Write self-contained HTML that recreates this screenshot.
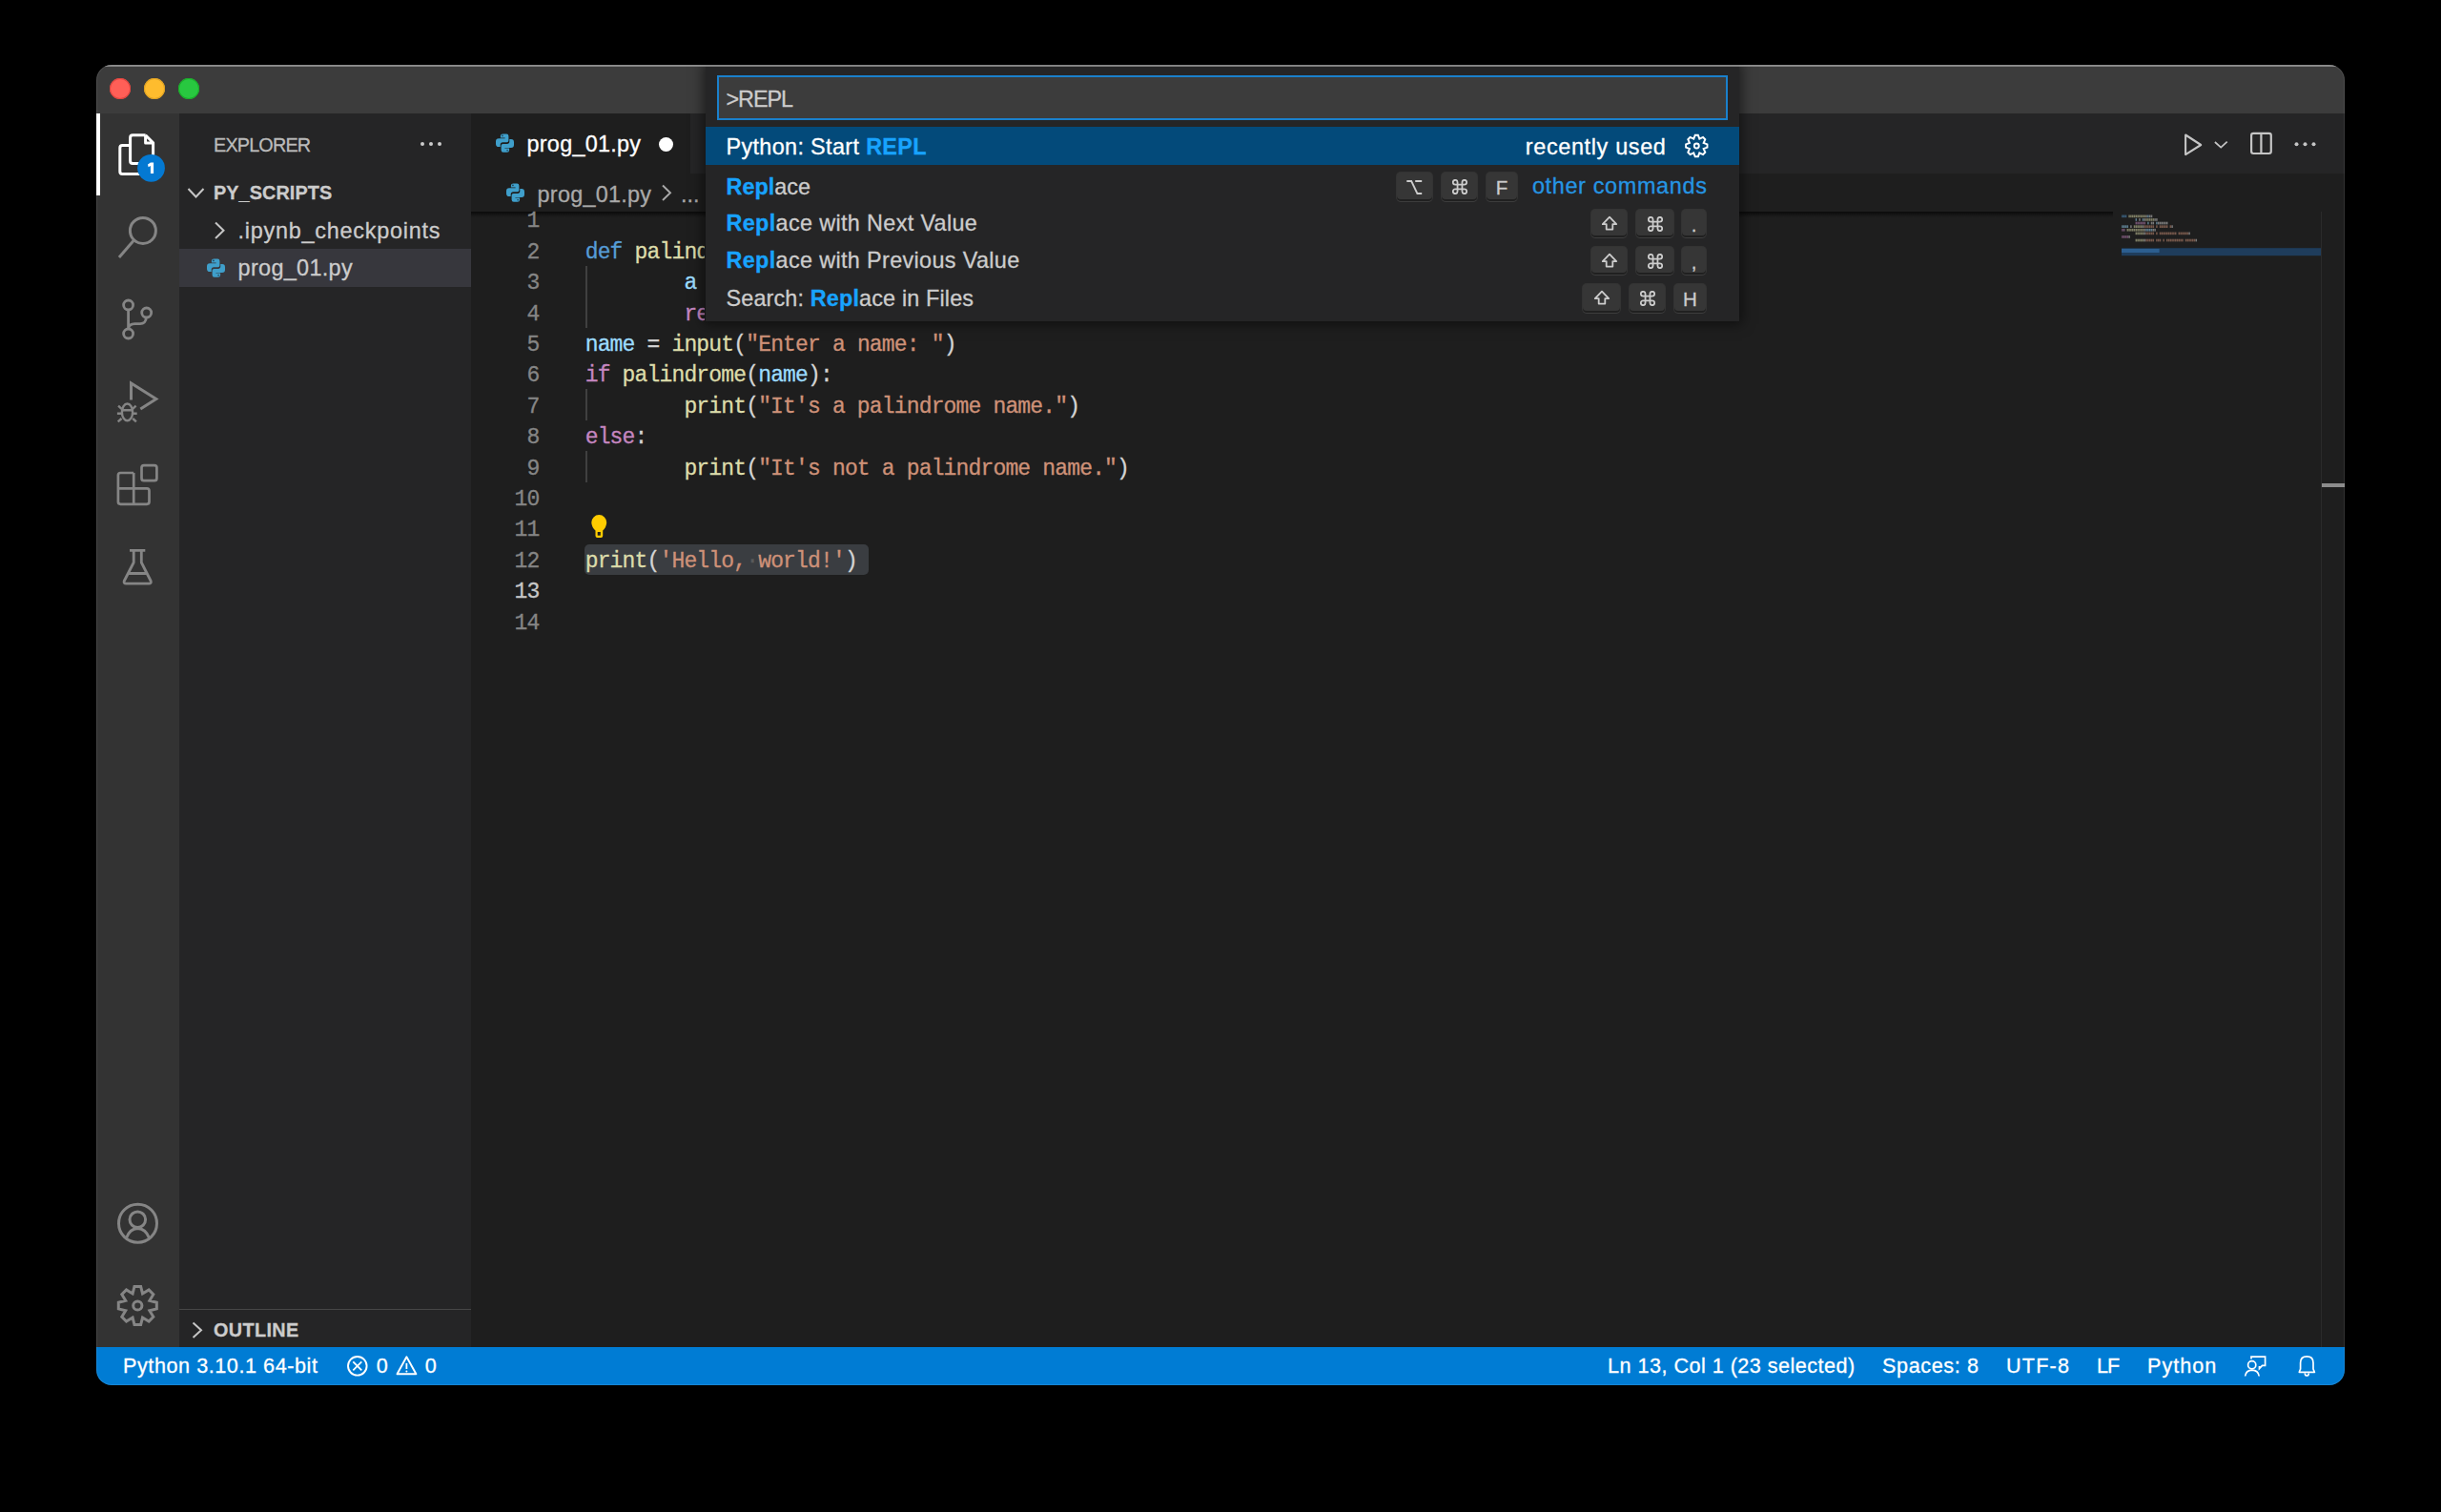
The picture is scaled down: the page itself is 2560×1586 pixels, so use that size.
<!DOCTYPE html>
<html><head><meta charset="utf-8"><style>
html,body{margin:0;padding:0;background:#000;width:2560px;height:1586px;overflow:hidden;}
.win{position:absolute;left:101px;top:68px;width:2358px;height:1385px;border-radius:16px;overflow:hidden;background:#1e1e1e;}
.in{position:absolute;left:-101px;top:-68px;width:2560px;height:1586px;}
.t{position:absolute;white-space:pre;-webkit-text-stroke:0.3px currentColor;}
.s{font-family:"Liberation Sans", sans-serif;}
.m{font-family:"Liberation Mono", monospace;}
.r{position:absolute;}
</style></head><body><div class="win"><div class="in">
<div class="r" style="left:101px;top:68px;width:2358px;height:51px;background:#3c3c3c;"></div>
<div class="r" style="left:101px;top:119px;width:87px;height:1294px;background:#333333;"></div>
<div class="r" style="left:101px;top:119px;width:4px;height:86px;background:#ffffff;"></div>
<div class="r" style="left:188px;top:119px;width:306px;height:1294px;background:#252526;"></div>
<div class="r" style="left:494px;top:119px;width:1965px;height:63px;background:#252526;"></div>
<div class="r" style="left:494px;top:119px;width:230px;height:63px;background:#1e1e1e;"></div>
<div class="r" style="left:494px;top:182px;width:1965px;height:1231px;background:#1e1e1e;"></div>
<div class="r" style="left:101px;top:1413px;width:2358px;height:40px;background:#007cd4;"></div>
<div class="r" style="left:115px;top:82px;width:22px;height:22px;border-radius:50%;background:#ff5f57;box-shadow:inset 0 0 0 1px #e0443e;"></div>
<div class="r" style="left:151px;top:82px;width:22px;height:22px;border-radius:50%;background:#febc2e;box-shadow:inset 0 0 0 1px #dea123;"></div>
<div class="r" style="left:187px;top:82px;width:22px;height:22px;border-radius:50%;background:#28c840;box-shadow:inset 0 0 0 1px #1aab29;"></div>
<svg class="r" style="left:0;top:0;" width="2560" height="1586" viewBox="0 0 2560 1586"><path d="M136.6 152.5 H128.3 Q125.8 152.5 125.8 155 V179.9 Q125.8 182.4 128.3 182.4 H150" fill="none" stroke="#ffffff" stroke-width="3" stroke-linejoin="round"/><path d="M152.6 141.8 H139.1 Q136.6 141.8 136.6 144.3 V169 Q136.6 171.5 139.1 171.5 H150 M152.6 141.8 L160.6 149.8 V172 M152.6 141.8 V150 H160.6" fill="none" stroke="#ffffff" stroke-width="3" stroke-linejoin="round"/><circle cx="158.5" cy="176.3" r="14.4" fill="#0479d2"/><circle cx="149.9" cy="241.9" r="13.5" fill="none" stroke="#858585" stroke-width="3"/><path d="M140.2 252.3 L125.9 268.8" fill="none" stroke="#858585" stroke-width="3" stroke-linecap="square"/><circle cx="134.6" cy="320" r="5" fill="none" stroke="#858585" stroke-width="2.8"/><circle cx="153.7" cy="328" r="5" fill="none" stroke="#858585" stroke-width="2.8"/><circle cx="134.6" cy="350" r="5" fill="none" stroke="#858585" stroke-width="2.8"/><path d="M134.6 325 V345 M153.3 333 C153.3 337.5 150.5 339.6 147 339.6 H141.5 C137.5 339.6 135 341.5 134.8 344.5" fill="none" stroke="#858585" stroke-width="2.8" /><path d="M137.5 419.6 V402 L163.8 418.4 L147.3 429" fill="none" stroke="#858585" stroke-width="3" stroke-linejoin="miter"/><ellipse cx="133.5" cy="432.4" rx="5.6" ry="8.9" fill="none" stroke="#858585" stroke-width="2.4"/><path d="M127.8 430.2 H138.8 M124.1 425.7 L127.5 428.8 M142.6 425.7 L139.2 428.8 M122.9 433.8 H127.5 M143.7 433.8 H139.2 M123.7 442.4 L127.5 439 M142.9 442.4 L139.2 439" fill="none" stroke="#858585" stroke-width="2.4" /><path d="M140.2 496 H126.4 Q123.9 496 123.9 498.5 V526.3 Q123.9 528.8 126.4 528.8 H154 Q156.5 528.8 156.5 526.3 V514.8 Q156.5 512.3 154 512.3 H123.9 M140.2 496 V528.8" fill="none" stroke="#858585" stroke-width="2.7" /><rect x="148.5" y="488.1" width="15.9" height="16.1" rx="2.5" fill="none" stroke="#858585" stroke-width="2.7"/><path d="M136 577.3 H152.3 M140.2 577.3 V590 L130.2 609.5 Q129.5 612.2 132.2 612.2 H156.2 Q158.9 612.2 158.2 609.5 L148.3 590 V577.3 M134.4 601.5 H153.9" fill="none" stroke="#858585" stroke-width="2.8" stroke-linejoin="round"/><circle cx="144.5" cy="1283.2" r="20" fill="none" stroke="#858585" stroke-width="3"/><circle cx="144.3" cy="1279.3" r="8.3" fill="none" stroke="#858585" stroke-width="3"/><path d="M132.4 1298.8 Q136 1288.6 144.4 1288.4 Q152.8 1288.6 156.6 1298.8" fill="none" stroke="#858585" stroke-width="3" /><path d="M140.97 1349.48 L147.63 1349.48 L149.50 1356.94 L156.10 1352.98 L160.82 1357.70 L156.86 1364.30 L164.32 1366.17 L164.32 1372.83 L156.86 1374.70 L160.82 1381.30 L156.10 1386.02 L149.50 1382.06 L147.63 1389.52 L140.97 1389.52 L139.10 1382.06 L132.50 1386.02 L127.78 1381.30 L131.74 1374.70 L124.28 1372.83 L124.28 1366.17 L131.74 1364.30 L127.78 1357.70 L132.50 1352.98 L139.10 1356.94 Z" fill="none" stroke="#858585" stroke-width="3" stroke-linejoin="miter"/><circle cx="144.3" cy="1369.5" r="4.6" fill="none" stroke="#858585" stroke-width="3"/></svg>
<svg class="r" style="left:0;top:0;" width="2560" height="1586" viewBox="0 0 2560 1586"><path d="M157.9 170.4 H161.1 V181.9 H157.9 V174.1 L155.6 175.3 L155 172.5 Z" fill="#ffffff"/></svg>
<div class="t s" style="left:224px;top:138.94px;font-size:19.8px;line-height:26px;color:#bbbbbb;letter-spacing:-0.81px;">EXPLORER</div>
<div class="r" style="left:441px;top:149px;width:4px;height:4px;border-radius:50%;background:#cccccc"></div>
<div class="r" style="left:450px;top:149px;width:4px;height:4px;border-radius:50%;background:#cccccc"></div>
<div class="r" style="left:459px;top:149px;width:4px;height:4px;border-radius:50%;background:#cccccc"></div>
<div class="t s" style="left:224px;top:189.14px;font-size:19.8px;line-height:26px;color:#cccccc;font-weight:700;letter-spacing:0.11px;">PY_SCRIPTS</div>
<div class="t s" style="left:249.6px;top:227.39px;font-size:23.4px;line-height:30px;color:#cccccc;letter-spacing:0.76px;">.ipynb_checkpoints</div>
<div class="r" style="left:188px;top:261px;width:306px;height:40px;background:#37373d;"></div>
<div class="t s" style="left:249.6px;top:265.89px;font-size:23.4px;line-height:30px;color:#cccccc;letter-spacing:0.33px;">prog_01.py</div>
<div class="r" style="left:188px;top:1373px;width:306px;height:1px;background:#474747;"></div>
<div class="t s" style="left:224px;top:1382.14px;font-size:19.8px;line-height:26px;color:#cccccc;font-weight:700;letter-spacing:0.4px;">OUTLINE</div>
<svg class="r" style="left:0;top:0;" width="2560" height="1586" viewBox="0 0 2560 1586"><path d="M197.5 198 L205.5 206.5 L213.5 198" fill="none" stroke="#c5c5c5" stroke-width="2" /><path d="M226 233.5 L234.5 241.7 L226 250" fill="none" stroke="#c5c5c5" stroke-width="2" /><path d="M202.5 1387.5 L211 1395.3 L202.5 1403" fill="none" stroke="#c5c5c5" stroke-width="2" /><path d="M695 194.5 L703 202.3 L695 210" fill="none" stroke="#a9a9a9" stroke-width="1.9" /><path d="M2292.1 141.5 V162.1 L2308.2 152 Z" fill="none" stroke="#c5c5c5" stroke-width="2.1" stroke-linejoin="round"/><path d="M2322.9 149 L2329.2 154.6 L2335.7 148.7" fill="none" stroke="#c5c5c5" stroke-width="1.7" /><rect x="2361.1" y="139.9" width="20.7" height="21.1" rx="2.2" fill="none" stroke="#c5c5c5" stroke-width="2.2"/><path d="M2371.4 140 V161" fill="none" stroke="#c5c5c5" stroke-width="2.2" /><circle cx="2408.5" cy="151.3" r="2" fill="#c5c5c5"/><circle cx="2417.5" cy="151.3" r="2" fill="#c5c5c5"/><circle cx="2426.5" cy="151.3" r="2" fill="#c5c5c5"/></svg>
<svg class="r" style="left:212.3px;top:266.3px" width="30" height="30" viewBox="0 0 30 30"><path d="M9.9 7.6 Q9.9 5.4 12.3 5.4 H16.2 Q18.4 5.4 18.4 7.7 V12.5 Q18.4 14.3 16.5 14.3 H12.3 Q9.7 14.3 9.7 16.9 V19.1 H8 Q5 19.1 5 16 V13.2 Q5 10.3 8 10.3 H14.6 V9.6 H9.9 Z" fill="#3f9fcb"/><path d="M9.9 7.6 Q9.9 5.4 12.3 5.4 H16.2 Q18.4 5.4 18.4 7.7 V12.5 Q18.4 14.3 16.5 14.3 H12.3 Q9.7 14.3 9.7 16.9 V19.1 H8 Q5 19.1 5 16 V13.2 Q5 10.3 8 10.3 H14.6 V9.6 H9.9 Z" fill="#3f9fcb" transform="rotate(180 14.5 15.1)"/><circle cx="11.9" cy="7.4" r="0.8" fill="#1e3a4a"/><circle cx="17.1" cy="22.8" r="0.8" fill="#1e3a4a"/></svg>
<svg class="r" style="left:515px;top:135px" width="30" height="30" viewBox="0 0 30 30"><path d="M9.9 7.6 Q9.9 5.4 12.3 5.4 H16.2 Q18.4 5.4 18.4 7.7 V12.5 Q18.4 14.3 16.5 14.3 H12.3 Q9.7 14.3 9.7 16.9 V19.1 H8 Q5 19.1 5 16 V13.2 Q5 10.3 8 10.3 H14.6 V9.6 H9.9 Z" fill="#3f9fcb"/><path d="M9.9 7.6 Q9.9 5.4 12.3 5.4 H16.2 Q18.4 5.4 18.4 7.7 V12.5 Q18.4 14.3 16.5 14.3 H12.3 Q9.7 14.3 9.7 16.9 V19.1 H8 Q5 19.1 5 16 V13.2 Q5 10.3 8 10.3 H14.6 V9.6 H9.9 Z" fill="#3f9fcb" transform="rotate(180 14.5 15.1)"/><circle cx="11.9" cy="7.4" r="0.8" fill="#1e3a4a"/><circle cx="17.1" cy="22.8" r="0.8" fill="#1e3a4a"/></svg>
<svg class="r" style="left:526px;top:186.8px" width="30" height="30" viewBox="0 0 30 30"><path d="M9.9 7.6 Q9.9 5.4 12.3 5.4 H16.2 Q18.4 5.4 18.4 7.7 V12.5 Q18.4 14.3 16.5 14.3 H12.3 Q9.7 14.3 9.7 16.9 V19.1 H8 Q5 19.1 5 16 V13.2 Q5 10.3 8 10.3 H14.6 V9.6 H9.9 Z" fill="#3f9fcb"/><path d="M9.9 7.6 Q9.9 5.4 12.3 5.4 H16.2 Q18.4 5.4 18.4 7.7 V12.5 Q18.4 14.3 16.5 14.3 H12.3 Q9.7 14.3 9.7 16.9 V19.1 H8 Q5 19.1 5 16 V13.2 Q5 10.3 8 10.3 H14.6 V9.6 H9.9 Z" fill="#3f9fcb" transform="rotate(180 14.5 15.1)"/><circle cx="11.9" cy="7.4" r="0.8" fill="#1e3a4a"/><circle cx="17.1" cy="22.8" r="0.8" fill="#1e3a4a"/></svg>
<div class="t s" style="left:552.5px;top:135.59px;font-size:23.4px;line-height:30px;color:#ffffff;letter-spacing:0.28px;">prog_01.py</div>
<div class="r" style="left:691px;top:144px;width:15px;height:15px;border-radius:50%;background:#ffffff"></div>
<div class="t s" style="left:563.6px;top:188.69px;font-size:23.4px;line-height:30px;color:#a9a9a9;letter-spacing:0.27px;">prog_01.py</div>
<div class="t s" style="left:714px;top:188.69px;font-size:23.4px;line-height:30px;color:#a9a9a9;">...</div>
<div class="r" style="left:494px;top:222px;width:1722px;height:6px;background:linear-gradient(#000000aa,#00000000);"></div>
<div class="t m" style="right:1994.5px;top:217.38px;font-size:23.0px;line-height:30px;color:#858585;letter-spacing:-0.84px;">1</div>
<div class="t m" style="right:1994.5px;top:249.78px;font-size:23.0px;line-height:30px;color:#858585;letter-spacing:-0.84px;">2</div>
<div class="t m" style="right:1994.5px;top:282.18px;font-size:23.0px;line-height:30px;color:#858585;letter-spacing:-0.84px;">3</div>
<div class="t m" style="right:1994.5px;top:314.58px;font-size:23.0px;line-height:30px;color:#858585;letter-spacing:-0.84px;">4</div>
<div class="t m" style="right:1994.5px;top:346.98px;font-size:23.0px;line-height:30px;color:#858585;letter-spacing:-0.84px;">5</div>
<div class="t m" style="right:1994.5px;top:379.38px;font-size:23.0px;line-height:30px;color:#858585;letter-spacing:-0.84px;">6</div>
<div class="t m" style="right:1994.5px;top:411.78px;font-size:23.0px;line-height:30px;color:#858585;letter-spacing:-0.84px;">7</div>
<div class="t m" style="right:1994.5px;top:444.18px;font-size:23.0px;line-height:30px;color:#858585;letter-spacing:-0.84px;">8</div>
<div class="t m" style="right:1994.5px;top:476.58px;font-size:23.0px;line-height:30px;color:#858585;letter-spacing:-0.84px;">9</div>
<div class="t m" style="right:1994.5px;top:508.98px;font-size:23.0px;line-height:30px;color:#858585;letter-spacing:-0.84px;">10</div>
<div class="t m" style="right:1994.5px;top:541.38px;font-size:23.0px;line-height:30px;color:#858585;letter-spacing:-0.84px;">11</div>
<div class="t m" style="right:1994.5px;top:573.78px;font-size:23.0px;line-height:30px;color:#858585;letter-spacing:-0.84px;">12</div>
<div class="t m" style="right:1994.5px;top:606.18px;font-size:23.0px;line-height:30px;color:#c6c6c6;letter-spacing:-0.84px;">13</div>
<div class="t m" style="right:1994.5px;top:638.58px;font-size:23.0px;line-height:30px;color:#858585;letter-spacing:-0.84px;">14</div>
<div class="r" style="left:613px;top:571px;width:298px;height:32px;background:#3a3d41;border-radius:5px;"></div>
<div class="t m" style="left:613.70px;top:250.78px;font-size:23.0px;letter-spacing:-0.840px;line-height:28px;width:125.30px;overflow:hidden;"><span style="color:#569cd6">def</span><span style="color:#d4d4d4"> </span><span style="color:#dcdcaa">palindrome</span><span style="color:#d4d4d4">(</span><span style="color:#9cdcfe">s</span><span style="color:#d4d4d4">):</span></div>
<div class="t m" style="left:717.38px;top:283.18px;font-size:23.0px;letter-spacing:-0.840px;line-height:28px;width:21.62px;overflow:hidden;"><span style="color:#9cdcfe">a</span><span style="color:#d4d4d4"> = </span><span style="color:#9cdcfe">s</span><span style="color:#d4d4d4">.</span><span style="color:#dcdcaa">upper</span><span style="color:#d4d4d4">()</span></div>
<div class="t m" style="left:717.38px;top:315.58px;font-size:23.0px;letter-spacing:-0.840px;line-height:28px;width:21.62px;overflow:hidden;"><span style="color:#c586c0">return</span><span style="color:#d4d4d4"> </span><span style="color:#9cdcfe">a</span><span style="color:#d4d4d4"> == </span><span style="color:#9cdcfe">a</span><span style="color:#d4d4d4">[::-</span><span style="color:#b5cea8">1</span><span style="color:#d4d4d4">]</span></div>
<div class="t m" style="left:613.70px;top:347.98px;font-size:23.0px;letter-spacing:-0.840px;line-height:28px;"><span style="color:#9cdcfe">name</span><span style="color:#d4d4d4"> = </span><span style="color:#dcdcaa">input</span><span style="color:#d4d4d4">(</span><span style="color:#ce9178">"Enter a name: "</span><span style="color:#d4d4d4">)</span></div>
<div class="t m" style="left:613.70px;top:380.38px;font-size:23.0px;letter-spacing:-0.840px;line-height:28px;"><span style="color:#c586c0">if</span><span style="color:#d4d4d4"> </span><span style="color:#dcdcaa">palindrome</span><span style="color:#d4d4d4">(</span><span style="color:#9cdcfe">name</span><span style="color:#d4d4d4">):</span></div>
<div class="t m" style="left:717.38px;top:412.78px;font-size:23.0px;letter-spacing:-0.840px;line-height:28px;"><span style="color:#dcdcaa">print</span><span style="color:#d4d4d4">(</span><span style="color:#ce9178">"It's a palindrome name."</span><span style="color:#d4d4d4">)</span></div>
<div class="t m" style="left:613.70px;top:445.18px;font-size:23.0px;letter-spacing:-0.840px;line-height:28px;"><span style="color:#c586c0">else</span><span style="color:#d4d4d4">:</span></div>
<div class="t m" style="left:717.38px;top:477.58px;font-size:23.0px;letter-spacing:-0.840px;line-height:28px;"><span style="color:#dcdcaa">print</span><span style="color:#d4d4d4">(</span><span style="color:#ce9178">"It's not a palindrome name."</span><span style="color:#d4d4d4">)</span></div>
<div class="t m" style="left:613.70px;top:574.78px;font-size:23.0px;letter-spacing:-0.840px;line-height:28px;"><span style="color:#dcdcaa">print</span><span style="color:#d4d4d4">(</span><span style="color:#ce9178">'Hello,</span><span style="color:#5a5a5a">·</span><span style="color:#ce9178">world!'</span><span style="color:#d4d4d4">)</span></div>
<div class="r" style="left:614px;top:279px;width:2px;height:32px;background:#404040;"></div>
<div class="r" style="left:614px;top:311px;width:2px;height:33px;background:#404040;"></div>
<div class="r" style="left:614px;top:408px;width:2px;height:33px;background:#404040;"></div>
<div class="r" style="left:614px;top:473px;width:2px;height:33px;background:#404040;"></div>
<svg class="r" style="left:0;top:0;" width="2560" height="1586" viewBox="0 0 2560 1586"><path d="M620.3 548 A7.95 7.95 0 1 1 636.2 548 Q636 553 632.2 556.5 V562 Q632.2 564 630.2 564 H626.5 Q624.5 564 624.5 562 V556.5 Q620.5 553 620.3 548 Z" fill="#ffcc00"/><rect x="626.7" y="558" width="3.1" height="3.7" fill="#1e1e1e"/></svg>
<svg class="r" style="left:0;top:0;" width="2560" height="1586" viewBox="0 0 2560 1586"><rect x="2225.15" y="225.5" width="1.5" height="2.7" fill="#569cd6" opacity="0.5"/><rect x="2226.95" y="225.5" width="1.5" height="2.7" fill="#569cd6" opacity="0.5"/><rect x="2228.75" y="225.5" width="1.5" height="2.7" fill="#569cd6" opacity="0.5"/><rect x="2232.35" y="225.5" width="1.5" height="2.7" fill="#dcdcaa" opacity="0.5"/><rect x="2234.15" y="225.5" width="1.5" height="2.7" fill="#dcdcaa" opacity="0.5"/><rect x="2235.95" y="225.5" width="1.5" height="2.7" fill="#dcdcaa" opacity="0.5"/><rect x="2237.75" y="225.5" width="1.5" height="2.7" fill="#dcdcaa" opacity="0.5"/><rect x="2239.55" y="225.5" width="1.5" height="2.7" fill="#dcdcaa" opacity="0.5"/><rect x="2241.35" y="225.5" width="1.5" height="2.7" fill="#dcdcaa" opacity="0.5"/><rect x="2243.15" y="225.5" width="1.5" height="2.7" fill="#dcdcaa" opacity="0.5"/><rect x="2244.95" y="225.5" width="1.5" height="2.7" fill="#dcdcaa" opacity="0.5"/><rect x="2246.75" y="225.5" width="1.5" height="2.7" fill="#dcdcaa" opacity="0.5"/><rect x="2248.55" y="225.5" width="1.5" height="2.7" fill="#dcdcaa" opacity="0.5"/><rect x="2250.35" y="225.5" width="1.5" height="2.7" fill="#d4d4d4" opacity="0.5"/><rect x="2252.15" y="225.5" width="1.5" height="2.7" fill="#9cdcfe" opacity="0.5"/><rect x="2253.95" y="225.5" width="1.5" height="2.7" fill="#d4d4d4" opacity="0.5"/><rect x="2255.75" y="225.5" width="1.5" height="2.7" fill="#d4d4d4" opacity="0.5"/><rect x="2239.55" y="229.1" width="1.5" height="2.7" fill="#9cdcfe" opacity="0.5"/><rect x="2243.15" y="229.1" width="1.5" height="2.7" fill="#d4d4d4" opacity="0.5"/><rect x="2246.75" y="229.1" width="1.5" height="2.7" fill="#9cdcfe" opacity="0.5"/><rect x="2248.55" y="229.1" width="1.5" height="2.7" fill="#d4d4d4" opacity="0.5"/><rect x="2250.35" y="229.1" width="1.5" height="2.7" fill="#dcdcaa" opacity="0.5"/><rect x="2252.15" y="229.1" width="1.5" height="2.7" fill="#dcdcaa" opacity="0.5"/><rect x="2253.95" y="229.1" width="1.5" height="2.7" fill="#dcdcaa" opacity="0.5"/><rect x="2255.75" y="229.1" width="1.5" height="2.7" fill="#dcdcaa" opacity="0.5"/><rect x="2257.55" y="229.1" width="1.5" height="2.7" fill="#dcdcaa" opacity="0.5"/><rect x="2259.35" y="229.1" width="1.5" height="2.7" fill="#d4d4d4" opacity="0.5"/><rect x="2261.15" y="229.1" width="1.5" height="2.7" fill="#d4d4d4" opacity="0.5"/><rect x="2239.55" y="232.7" width="1.5" height="2.7" fill="#c586c0" opacity="0.5"/><rect x="2241.35" y="232.7" width="1.5" height="2.7" fill="#c586c0" opacity="0.5"/><rect x="2243.15" y="232.7" width="1.5" height="2.7" fill="#c586c0" opacity="0.5"/><rect x="2244.95" y="232.7" width="1.5" height="2.7" fill="#c586c0" opacity="0.5"/><rect x="2246.75" y="232.7" width="1.5" height="2.7" fill="#c586c0" opacity="0.5"/><rect x="2248.55" y="232.7" width="1.5" height="2.7" fill="#c586c0" opacity="0.5"/><rect x="2252.15" y="232.7" width="1.5" height="2.7" fill="#9cdcfe" opacity="0.5"/><rect x="2255.75" y="232.7" width="1.5" height="2.7" fill="#d4d4d4" opacity="0.5"/><rect x="2257.55" y="232.7" width="1.5" height="2.7" fill="#d4d4d4" opacity="0.5"/><rect x="2261.15" y="232.7" width="1.5" height="2.7" fill="#9cdcfe" opacity="0.5"/><rect x="2262.95" y="232.7" width="1.5" height="2.7" fill="#d4d4d4" opacity="0.5"/><rect x="2264.75" y="232.7" width="1.5" height="2.7" fill="#d4d4d4" opacity="0.5"/><rect x="2266.55" y="232.7" width="1.5" height="2.7" fill="#d4d4d4" opacity="0.5"/><rect x="2268.35" y="232.7" width="1.5" height="2.7" fill="#d4d4d4" opacity="0.5"/><rect x="2270.15" y="232.7" width="1.5" height="2.7" fill="#d4d4d4" opacity="0.5"/><rect x="2271.95" y="232.7" width="1.5" height="2.7" fill="#d4d4d4" opacity="0.5"/><rect x="2225.15" y="236.3" width="1.5" height="2.7" fill="#9cdcfe" opacity="0.5"/><rect x="2226.95" y="236.3" width="1.5" height="2.7" fill="#9cdcfe" opacity="0.5"/><rect x="2228.75" y="236.3" width="1.5" height="2.7" fill="#9cdcfe" opacity="0.5"/><rect x="2230.55" y="236.3" width="1.5" height="2.7" fill="#9cdcfe" opacity="0.5"/><rect x="2234.15" y="236.3" width="1.5" height="2.7" fill="#d4d4d4" opacity="0.5"/><rect x="2237.75" y="236.3" width="1.5" height="2.7" fill="#dcdcaa" opacity="0.5"/><rect x="2239.55" y="236.3" width="1.5" height="2.7" fill="#dcdcaa" opacity="0.5"/><rect x="2241.35" y="236.3" width="1.5" height="2.7" fill="#dcdcaa" opacity="0.5"/><rect x="2243.15" y="236.3" width="1.5" height="2.7" fill="#dcdcaa" opacity="0.5"/><rect x="2244.95" y="236.3" width="1.5" height="2.7" fill="#dcdcaa" opacity="0.5"/><rect x="2246.75" y="236.3" width="1.5" height="2.7" fill="#d4d4d4" opacity="0.5"/><rect x="2248.55" y="236.3" width="1.5" height="2.7" fill="#ce9178" opacity="0.5"/><rect x="2250.35" y="236.3" width="1.5" height="2.7" fill="#ce9178" opacity="0.5"/><rect x="2252.15" y="236.3" width="1.5" height="2.7" fill="#ce9178" opacity="0.5"/><rect x="2253.95" y="236.3" width="1.5" height="2.7" fill="#ce9178" opacity="0.5"/><rect x="2255.75" y="236.3" width="1.5" height="2.7" fill="#ce9178" opacity="0.5"/><rect x="2257.55" y="236.3" width="1.5" height="2.7" fill="#ce9178" opacity="0.5"/><rect x="2261.15" y="236.3" width="1.5" height="2.7" fill="#ce9178" opacity="0.5"/><rect x="2264.75" y="236.3" width="1.5" height="2.7" fill="#ce9178" opacity="0.5"/><rect x="2266.55" y="236.3" width="1.5" height="2.7" fill="#ce9178" opacity="0.5"/><rect x="2268.35" y="236.3" width="1.5" height="2.7" fill="#ce9178" opacity="0.5"/><rect x="2270.15" y="236.3" width="1.5" height="2.7" fill="#ce9178" opacity="0.5"/><rect x="2271.95" y="236.3" width="1.5" height="2.7" fill="#ce9178" opacity="0.5"/><rect x="2275.55" y="236.3" width="1.5" height="2.7" fill="#ce9178" opacity="0.5"/><rect x="2277.35" y="236.3" width="1.5" height="2.7" fill="#d4d4d4" opacity="0.5"/><rect x="2225.15" y="239.9" width="1.5" height="2.7" fill="#c586c0" opacity="0.5"/><rect x="2226.95" y="239.9" width="1.5" height="2.7" fill="#c586c0" opacity="0.5"/><rect x="2230.55" y="239.9" width="1.5" height="2.7" fill="#dcdcaa" opacity="0.5"/><rect x="2232.35" y="239.9" width="1.5" height="2.7" fill="#dcdcaa" opacity="0.5"/><rect x="2234.15" y="239.9" width="1.5" height="2.7" fill="#dcdcaa" opacity="0.5"/><rect x="2235.95" y="239.9" width="1.5" height="2.7" fill="#dcdcaa" opacity="0.5"/><rect x="2237.75" y="239.9" width="1.5" height="2.7" fill="#dcdcaa" opacity="0.5"/><rect x="2239.55" y="239.9" width="1.5" height="2.7" fill="#dcdcaa" opacity="0.5"/><rect x="2241.35" y="239.9" width="1.5" height="2.7" fill="#dcdcaa" opacity="0.5"/><rect x="2243.15" y="239.9" width="1.5" height="2.7" fill="#dcdcaa" opacity="0.5"/><rect x="2244.95" y="239.9" width="1.5" height="2.7" fill="#dcdcaa" opacity="0.5"/><rect x="2246.75" y="239.9" width="1.5" height="2.7" fill="#dcdcaa" opacity="0.5"/><rect x="2248.55" y="239.9" width="1.5" height="2.7" fill="#d4d4d4" opacity="0.5"/><rect x="2250.35" y="239.9" width="1.5" height="2.7" fill="#9cdcfe" opacity="0.5"/><rect x="2252.15" y="239.9" width="1.5" height="2.7" fill="#9cdcfe" opacity="0.5"/><rect x="2253.95" y="239.9" width="1.5" height="2.7" fill="#9cdcfe" opacity="0.5"/><rect x="2255.75" y="239.9" width="1.5" height="2.7" fill="#9cdcfe" opacity="0.5"/><rect x="2257.55" y="239.9" width="1.5" height="2.7" fill="#d4d4d4" opacity="0.5"/><rect x="2259.35" y="239.9" width="1.5" height="2.7" fill="#d4d4d4" opacity="0.5"/><rect x="2239.55" y="243.5" width="1.5" height="2.7" fill="#dcdcaa" opacity="0.5"/><rect x="2241.35" y="243.5" width="1.5" height="2.7" fill="#dcdcaa" opacity="0.5"/><rect x="2243.15" y="243.5" width="1.5" height="2.7" fill="#dcdcaa" opacity="0.5"/><rect x="2244.95" y="243.5" width="1.5" height="2.7" fill="#dcdcaa" opacity="0.5"/><rect x="2246.75" y="243.5" width="1.5" height="2.7" fill="#dcdcaa" opacity="0.5"/><rect x="2248.55" y="243.5" width="1.5" height="2.7" fill="#d4d4d4" opacity="0.5"/><rect x="2250.35" y="243.5" width="1.5" height="2.7" fill="#ce9178" opacity="0.5"/><rect x="2252.15" y="243.5" width="1.5" height="2.7" fill="#ce9178" opacity="0.5"/><rect x="2253.95" y="243.5" width="1.5" height="2.7" fill="#ce9178" opacity="0.5"/><rect x="2255.75" y="243.5" width="1.5" height="2.7" fill="#ce9178" opacity="0.5"/><rect x="2257.55" y="243.5" width="1.5" height="2.7" fill="#ce9178" opacity="0.5"/><rect x="2261.15" y="243.5" width="1.5" height="2.7" fill="#ce9178" opacity="0.5"/><rect x="2264.75" y="243.5" width="1.5" height="2.7" fill="#ce9178" opacity="0.5"/><rect x="2266.55" y="243.5" width="1.5" height="2.7" fill="#ce9178" opacity="0.5"/><rect x="2268.35" y="243.5" width="1.5" height="2.7" fill="#ce9178" opacity="0.5"/><rect x="2270.15" y="243.5" width="1.5" height="2.7" fill="#ce9178" opacity="0.5"/><rect x="2271.95" y="243.5" width="1.5" height="2.7" fill="#ce9178" opacity="0.5"/><rect x="2273.75" y="243.5" width="1.5" height="2.7" fill="#ce9178" opacity="0.5"/><rect x="2275.55" y="243.5" width="1.5" height="2.7" fill="#ce9178" opacity="0.5"/><rect x="2277.35" y="243.5" width="1.5" height="2.7" fill="#ce9178" opacity="0.5"/><rect x="2279.15" y="243.5" width="1.5" height="2.7" fill="#ce9178" opacity="0.5"/><rect x="2280.95" y="243.5" width="1.5" height="2.7" fill="#ce9178" opacity="0.5"/><rect x="2284.55" y="243.5" width="1.5" height="2.7" fill="#ce9178" opacity="0.5"/><rect x="2286.35" y="243.5" width="1.5" height="2.7" fill="#ce9178" opacity="0.5"/><rect x="2288.15" y="243.5" width="1.5" height="2.7" fill="#ce9178" opacity="0.5"/><rect x="2289.95" y="243.5" width="1.5" height="2.7" fill="#ce9178" opacity="0.5"/><rect x="2291.75" y="243.5" width="1.5" height="2.7" fill="#ce9178" opacity="0.5"/><rect x="2293.55" y="243.5" width="1.5" height="2.7" fill="#ce9178" opacity="0.5"/><rect x="2295.35" y="243.5" width="1.5" height="2.7" fill="#d4d4d4" opacity="0.5"/><rect x="2225.15" y="247.1" width="1.5" height="2.7" fill="#c586c0" opacity="0.5"/><rect x="2226.95" y="247.1" width="1.5" height="2.7" fill="#c586c0" opacity="0.5"/><rect x="2228.75" y="247.1" width="1.5" height="2.7" fill="#c586c0" opacity="0.5"/><rect x="2230.55" y="247.1" width="1.5" height="2.7" fill="#c586c0" opacity="0.5"/><rect x="2232.35" y="247.1" width="1.5" height="2.7" fill="#d4d4d4" opacity="0.5"/><rect x="2239.55" y="250.7" width="1.5" height="2.7" fill="#dcdcaa" opacity="0.5"/><rect x="2241.35" y="250.7" width="1.5" height="2.7" fill="#dcdcaa" opacity="0.5"/><rect x="2243.15" y="250.7" width="1.5" height="2.7" fill="#dcdcaa" opacity="0.5"/><rect x="2244.95" y="250.7" width="1.5" height="2.7" fill="#dcdcaa" opacity="0.5"/><rect x="2246.75" y="250.7" width="1.5" height="2.7" fill="#dcdcaa" opacity="0.5"/><rect x="2248.55" y="250.7" width="1.5" height="2.7" fill="#d4d4d4" opacity="0.5"/><rect x="2250.35" y="250.7" width="1.5" height="2.7" fill="#ce9178" opacity="0.5"/><rect x="2252.15" y="250.7" width="1.5" height="2.7" fill="#ce9178" opacity="0.5"/><rect x="2253.95" y="250.7" width="1.5" height="2.7" fill="#ce9178" opacity="0.5"/><rect x="2255.75" y="250.7" width="1.5" height="2.7" fill="#ce9178" opacity="0.5"/><rect x="2257.55" y="250.7" width="1.5" height="2.7" fill="#ce9178" opacity="0.5"/><rect x="2261.15" y="250.7" width="1.5" height="2.7" fill="#ce9178" opacity="0.5"/><rect x="2262.95" y="250.7" width="1.5" height="2.7" fill="#ce9178" opacity="0.5"/><rect x="2264.75" y="250.7" width="1.5" height="2.7" fill="#ce9178" opacity="0.5"/><rect x="2268.35" y="250.7" width="1.5" height="2.7" fill="#ce9178" opacity="0.5"/><rect x="2271.95" y="250.7" width="1.5" height="2.7" fill="#ce9178" opacity="0.5"/><rect x="2273.75" y="250.7" width="1.5" height="2.7" fill="#ce9178" opacity="0.5"/><rect x="2275.55" y="250.7" width="1.5" height="2.7" fill="#ce9178" opacity="0.5"/><rect x="2277.35" y="250.7" width="1.5" height="2.7" fill="#ce9178" opacity="0.5"/><rect x="2279.15" y="250.7" width="1.5" height="2.7" fill="#ce9178" opacity="0.5"/><rect x="2280.95" y="250.7" width="1.5" height="2.7" fill="#ce9178" opacity="0.5"/><rect x="2282.75" y="250.7" width="1.5" height="2.7" fill="#ce9178" opacity="0.5"/><rect x="2284.55" y="250.7" width="1.5" height="2.7" fill="#ce9178" opacity="0.5"/><rect x="2286.35" y="250.7" width="1.5" height="2.7" fill="#ce9178" opacity="0.5"/><rect x="2288.15" y="250.7" width="1.5" height="2.7" fill="#ce9178" opacity="0.5"/><rect x="2291.75" y="250.7" width="1.5" height="2.7" fill="#ce9178" opacity="0.5"/><rect x="2293.55" y="250.7" width="1.5" height="2.7" fill="#ce9178" opacity="0.5"/><rect x="2295.35" y="250.7" width="1.5" height="2.7" fill="#ce9178" opacity="0.5"/><rect x="2297.15" y="250.7" width="1.5" height="2.7" fill="#ce9178" opacity="0.5"/><rect x="2298.95" y="250.7" width="1.5" height="2.7" fill="#ce9178" opacity="0.5"/><rect x="2300.75" y="250.7" width="1.5" height="2.7" fill="#ce9178" opacity="0.5"/><rect x="2302.55" y="250.7" width="1.5" height="2.7" fill="#d4d4d4" opacity="0.5"/><rect x="2225" y="260.2" width="209" height="8" fill="#1f3d5c"/><rect x="2225" y="261" width="39.6" height="4" fill="#2c5e8f"/></svg>
<div class="r" style="left:2434px;top:222px;width:1px;height:1191px;background:#2b2b2b;"></div>
<div class="r" style="left:2435px;top:507px;width:24px;height:4px;background:#8c8c8c;"></div>
<div class="r" style="left:740px;top:68px;width:1084px;height:269px;background:#252526;box-shadow:0 0 12px 3px rgba(0,0,0,0.5);"></div>
<div class="r" style="left:752px;top:79px;width:1056px;height:43px;background:#3c3c3c;border:2px solid #1a80cc;"></div>
<div class="t s" style="left:761.5px;top:88.89px;font-size:23.4px;line-height:30px;color:#cccccc;letter-spacing:-1.05px;">&gt;REPL</div>
<div class="r" style="left:740px;top:133.4px;width:1084px;height:40.0px;background:#034a7a;"></div>
<div class="t s" style="left:761.5px;top:139.19px;font-size:23.4px;line-height:30px;color:#cccccc;letter-spacing:0.35px;"><span style="color:#ffffff;">Python: Start </span><span style="color:#18a3ff;font-weight:700">REPL</span></div>
<div class="t s" style="left:761.5px;top:180.69px;font-size:23.4px;line-height:30px;color:#cccccc;"><span style="color:#18a3ff;font-weight:700">Repl</span><span style="color:#cccccc;">ace</span></div>
<div class="t s" style="left:761.5px;top:218.69px;font-size:23.4px;line-height:30px;color:#cccccc;letter-spacing:0.35px;"><span style="color:#18a3ff;font-weight:700">Repl</span><span style="color:#cccccc;">ace with Next Value</span></div>
<div class="t s" style="left:761.5px;top:258.19px;font-size:23.4px;line-height:30px;color:#cccccc;letter-spacing:0.35px;"><span style="color:#18a3ff;font-weight:700">Repl</span><span style="color:#cccccc;">ace with Previous Value</span></div>
<div class="t s" style="left:761.5px;top:297.59px;font-size:23.4px;line-height:30px;color:#cccccc;letter-spacing:0.15px;"><span style="color:#cccccc;">Search: </span><span style="color:#18a3ff;font-weight:700">Repl</span><span style="color:#cccccc;">ace in Files</span></div>
<div class="t s" style="right:812.5px;top:138.89px;font-size:23.4px;line-height:30px;color:#ffffff;letter-spacing:0.66px;">recently used</div>
<div class="t s" style="right:769.5px;top:180.49px;font-size:23.4px;line-height:30px;color:#2595e4;letter-spacing:0.67px;">other commands</div>
<svg class="r" style="left:0;top:0;" width="2560" height="1586" viewBox="0 0 2560 1586"><path d="M1777.71 141.81 L1780.89 141.81 L1782.32 145.70 L1786.08 143.96 L1788.34 146.22 L1786.60 149.98 L1790.49 151.41 L1790.49 154.59 L1786.60 156.02 L1788.34 159.78 L1786.08 162.04 L1782.32 160.30 L1780.89 164.19 L1777.71 164.19 L1776.28 160.30 L1772.52 162.04 L1770.26 159.78 L1772.00 156.02 L1768.11 154.59 L1768.11 151.41 L1772.00 149.98 L1770.26 146.22 L1772.52 143.96 L1776.28 145.70 Z" fill="none" stroke="#ffffff" stroke-width="1.9" stroke-linejoin="miter"/><circle cx="1779.3" cy="153" r="2.5" fill="none" stroke="#ffffff" stroke-width="1.9"/></svg>
<div class="r" style="left:1464px;top:180px;width:39px;height:32px;box-sizing:border-box;background:#363636;border:1.5px solid rgba(51,51,51,0.6);border-bottom-color:rgba(68,68,68,0.6);border-radius:5px;box-shadow:inset 0 -2px 0 rgba(0,0,0,0.4);"></div>
<svg class="r" style="left:1475.3px;top:188.8px" width="16.4" height="15" viewBox="0 0 16.4 15"><path d="M0.3 1 H5.2 L11.4 14 H16.2 M9.2 1 H16.2" fill="none" stroke="#cccccc" stroke-width="1.8"/></svg>
<div class="r" style="left:1511px;top:180px;width:39px;height:32px;box-sizing:border-box;background:#363636;border:1.5px solid rgba(51,51,51,0.6);border-bottom-color:rgba(68,68,68,0.6);border-radius:5px;box-shadow:inset 0 -2px 0 rgba(0,0,0,0.4);"></div>
<svg class="r" style="left:1522.5px;top:188.3px" width="16" height="16" viewBox="-1.8 -1.8 19.6 19.6"><path d="M5 5 V2.1 A2.9 2.9 0 1 0 2.1 5 H13.9 A2.9 2.9 0 1 0 11 2.1 V13.9 A2.9 2.9 0 1 0 13.9 11 H2.1 A2.9 2.9 0 1 0 5 13.9 V5" fill="none" stroke="#cccccc" stroke-width="2.2"/></svg>
<div class="r" style="left:1558px;top:180px;width:34px;height:32px;box-sizing:border-box;background:#363636;border:1.5px solid rgba(51,51,51,0.6);border-bottom-color:rgba(68,68,68,0.6);border-radius:5px;box-shadow:inset 0 -2px 0 rgba(0,0,0,0.4);"></div>
<div class="t s" style="left:1575.0px;top:183.19px;font-size:20.5px;line-height:27px;color:#cccccc;transform:translateX(-50%);">F</div>
<div class="r" style="left:1668px;top:219px;width:39px;height:31px;box-sizing:border-box;background:#363636;border:1.5px solid rgba(51,51,51,0.6);border-bottom-color:rgba(68,68,68,0.6);border-radius:5px;box-shadow:inset 0 -2px 0 rgba(0,0,0,0.4);"></div>
<svg class="r" style="left:1678.5px;top:226px" width="18" height="18" viewBox="0 0 18 18"><path d="M9 1.6 L16.2 9.2 H12.3 V14.6 H5.7 V9.2 H1.8 Z" fill="none" stroke="#cccccc" stroke-width="1.8" stroke-linejoin="round"/></svg>
<div class="r" style="left:1715px;top:219px;width:41px;height:31px;box-sizing:border-box;background:#363636;border:1.5px solid rgba(51,51,51,0.6);border-bottom-color:rgba(68,68,68,0.6);border-radius:5px;box-shadow:inset 0 -2px 0 rgba(0,0,0,0.4);"></div>
<svg class="r" style="left:1727.5px;top:227.3px" width="16" height="16" viewBox="-1.8 -1.8 19.6 19.6"><path d="M5 5 V2.1 A2.9 2.9 0 1 0 2.1 5 H13.9 A2.9 2.9 0 1 0 11 2.1 V13.9 A2.9 2.9 0 1 0 13.9 11 H2.1 A2.9 2.9 0 1 0 5 13.9 V5" fill="none" stroke="#cccccc" stroke-width="2.2"/></svg>
<div class="r" style="left:1763px;top:219px;width:27px;height:31px;box-sizing:border-box;background:#363636;border:1.5px solid rgba(51,51,51,0.6);border-bottom-color:rgba(68,68,68,0.6);border-radius:5px;box-shadow:inset 0 -2px 0 rgba(0,0,0,0.4);"></div>
<div class="t s" style="left:1776.5px;top:222.19px;font-size:20.5px;line-height:27px;color:#cccccc;transform:translateX(-50%);">.</div>
<div class="r" style="left:1668px;top:258px;width:39px;height:31px;box-sizing:border-box;background:#363636;border:1.5px solid rgba(51,51,51,0.6);border-bottom-color:rgba(68,68,68,0.6);border-radius:5px;box-shadow:inset 0 -2px 0 rgba(0,0,0,0.4);"></div>
<svg class="r" style="left:1678.5px;top:265px" width="18" height="18" viewBox="0 0 18 18"><path d="M9 1.6 L16.2 9.2 H12.3 V14.6 H5.7 V9.2 H1.8 Z" fill="none" stroke="#cccccc" stroke-width="1.8" stroke-linejoin="round"/></svg>
<div class="r" style="left:1715px;top:258px;width:41px;height:31px;box-sizing:border-box;background:#363636;border:1.5px solid rgba(51,51,51,0.6);border-bottom-color:rgba(68,68,68,0.6);border-radius:5px;box-shadow:inset 0 -2px 0 rgba(0,0,0,0.4);"></div>
<svg class="r" style="left:1727.5px;top:266.3px" width="16" height="16" viewBox="-1.8 -1.8 19.6 19.6"><path d="M5 5 V2.1 A2.9 2.9 0 1 0 2.1 5 H13.9 A2.9 2.9 0 1 0 11 2.1 V13.9 A2.9 2.9 0 1 0 13.9 11 H2.1 A2.9 2.9 0 1 0 5 13.9 V5" fill="none" stroke="#cccccc" stroke-width="2.2"/></svg>
<div class="r" style="left:1763px;top:258px;width:27px;height:31px;box-sizing:border-box;background:#363636;border:1.5px solid rgba(51,51,51,0.6);border-bottom-color:rgba(68,68,68,0.6);border-radius:5px;box-shadow:inset 0 -2px 0 rgba(0,0,0,0.4);"></div>
<div class="t s" style="left:1776.5px;top:261.19px;font-size:20.5px;line-height:27px;color:#cccccc;transform:translateX(-50%);">,</div>
<div class="r" style="left:1659px;top:297px;width:41px;height:32px;box-sizing:border-box;background:#363636;border:1.5px solid rgba(51,51,51,0.6);border-bottom-color:rgba(68,68,68,0.6);border-radius:5px;box-shadow:inset 0 -2px 0 rgba(0,0,0,0.4);"></div>
<svg class="r" style="left:1670.5px;top:304px" width="18" height="18" viewBox="0 0 18 18"><path d="M9 1.6 L16.2 9.2 H12.3 V14.6 H5.7 V9.2 H1.8 Z" fill="none" stroke="#cccccc" stroke-width="1.8" stroke-linejoin="round"/></svg>
<div class="r" style="left:1708px;top:297px;width:39px;height:32px;box-sizing:border-box;background:#363636;border:1.5px solid rgba(51,51,51,0.6);border-bottom-color:rgba(68,68,68,0.6);border-radius:5px;box-shadow:inset 0 -2px 0 rgba(0,0,0,0.4);"></div>
<svg class="r" style="left:1719.5px;top:305.3px" width="16" height="16" viewBox="-1.8 -1.8 19.6 19.6"><path d="M5 5 V2.1 A2.9 2.9 0 1 0 2.1 5 H13.9 A2.9 2.9 0 1 0 11 2.1 V13.9 A2.9 2.9 0 1 0 13.9 11 H2.1 A2.9 2.9 0 1 0 5 13.9 V5" fill="none" stroke="#cccccc" stroke-width="2.2"/></svg>
<div class="r" style="left:1755px;top:297px;width:35px;height:32px;box-sizing:border-box;background:#363636;border:1.5px solid rgba(51,51,51,0.6);border-bottom-color:rgba(68,68,68,0.6);border-radius:5px;box-shadow:inset 0 -2px 0 rgba(0,0,0,0.4);"></div>
<div class="t s" style="left:1772.5px;top:300.19px;font-size:20.5px;line-height:27px;color:#cccccc;transform:translateX(-50%);">H</div>
<div class="t s" style="left:129px;top:1418.51px;font-size:21.6px;line-height:28px;color:#ffffff;letter-spacing:0.56px;">Python 3.10.1 64-bit</div>
<div class="t s" style="left:394.8px;top:1418.51px;font-size:21.6px;line-height:28px;color:#ffffff;">0</div>
<div class="t s" style="left:445.7px;top:1418.51px;font-size:21.6px;line-height:28px;color:#ffffff;">0</div>
<div class="t s" style="left:1686px;top:1418.51px;font-size:21.6px;line-height:28px;color:#ffffff;letter-spacing:0.48px;">Ln 13, Col 1 (23 selected)</div>
<div class="t s" style="left:1974px;top:1418.51px;font-size:21.6px;line-height:28px;color:#ffffff;letter-spacing:0.62px;">Spaces: 8</div>
<div class="t s" style="left:2104px;top:1418.51px;font-size:21.6px;line-height:28px;color:#ffffff;letter-spacing:1.2px;">UTF-8</div>
<div class="t s" style="left:2199px;top:1418.51px;font-size:21.6px;line-height:28px;color:#ffffff;letter-spacing:-0.9px;">LF</div>
<div class="t s" style="left:2252px;top:1418.51px;font-size:21.6px;line-height:28px;color:#ffffff;letter-spacing:1.0px;">Python</div>
<svg class="r" style="left:0;top:0;" width="2560" height="1586" viewBox="0 0 2560 1586"><circle cx="374.8" cy="1432.8" r="9.8" fill="none" stroke="#fff" stroke-width="1.9"/><path d="M370.3 1428.3 L379.3 1437.3 M379.3 1428.3 L370.3 1437.3" fill="none" stroke="#fff" stroke-width="1.8" /><path d="M426.4 1423.3 L416.5 1441.3 H436.4 Z" fill="none" stroke="#fff" stroke-width="1.9" stroke-linejoin="round"/><path d="M426.4 1429.9 V1436" fill="none" stroke="#fff" stroke-width="1.8" /><circle cx="426.4" cy="1438.4" r="1" fill="#fff"/><circle cx="2361.7" cy="1431.8" r="4.1" fill="none" stroke="#fff" stroke-width="1.7"/><path d="M2354.6 1443.5 Q2355.5 1437.3 2361.8 1437.2 Q2368.3 1437.3 2369.2 1443.5" fill="none" stroke="#fff" stroke-width="1.7" /><path d="M2361 1425.5 V1423.1 H2375.6 V1432.3 H2372.5 L2369.5 1435.5 V1433" fill="none" stroke="#fff" stroke-width="1.7" /><path d="M2411.3 1439.3 H2427.4 L2426 1436 V1429.5 Q2426 1422.9 2419.3 1422.9 Q2412.6 1422.9 2412.6 1429.5 V1436 Z M2417.3 1440.5 Q2417.3 1443 2419.3 1443 Q2421.3 1443 2421.3 1440.5" fill="none" stroke="#fff" stroke-width="1.7" stroke-linejoin="round"/></svg>
<div class="r" style="left:101px;top:68px;width:2358px;height:2px;background:#9a9a9a;opacity:.75"></div>
<div class="r" style="left:101px;top:68px;width:2358px;height:1385px;border-radius:16px;box-shadow:inset 0 0 0 1px rgba(255,255,255,0.09);pointer-events:none"></div>
</div></div></body></html>
